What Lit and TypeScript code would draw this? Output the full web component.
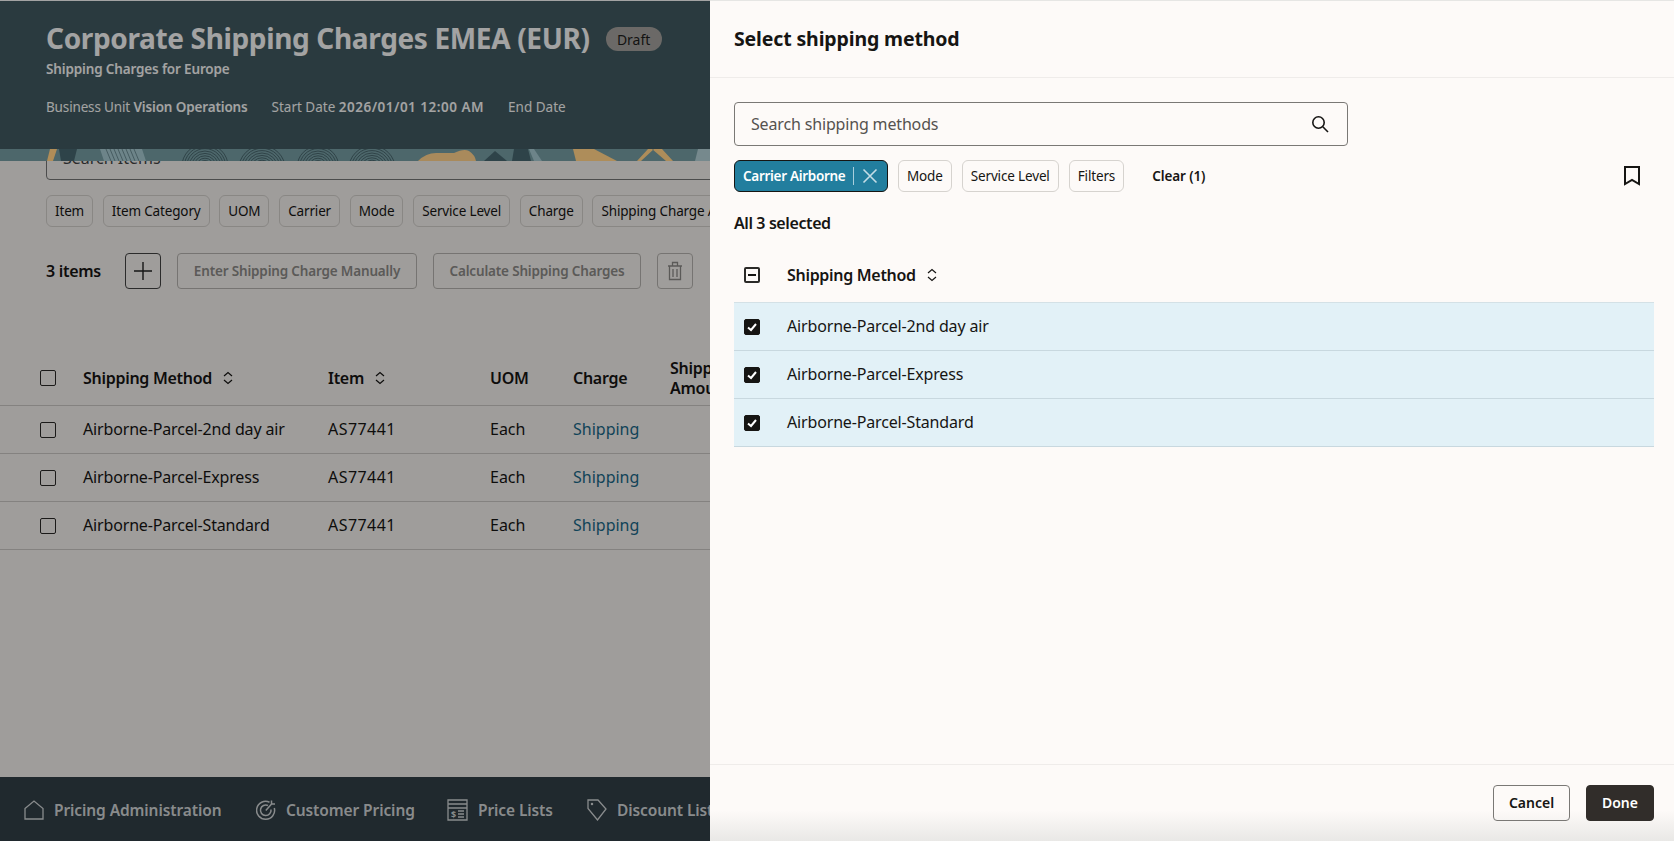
import { LitElement, html, svg, css } from "lit";
import { customElement, state } from "lit/decorators.js";

const rows = ["Airborne-Parcel-2nd day air", "Airborne-Parcel-Express", "Airborne-Parcel-Standard"];
const leftChips = ["Item", "Item Category", "UOM", "Carrier", "Mode", "Service Level", "Charge", "Shipping Charge Amount"];

const sortIcon = html`<svg class="sort" viewBox="0 0 12 14" width="12" height="14" fill="none" stroke="currentColor" stroke-width="1.2">
  <path d="M2 5 6 1.500 10 5M2 9 6 12.500 10 9" />
</svg>`;

const arcs = (cx: number, cy: number, n: number) =>
  Array.from({ length: n }, (_, i) => svg`<circle cx=${cx} cy=${cy} r=${4 + i * 2.4} />`);

// the strip paints above the scrim, so these are the dimmed colours as seen
const pattern = html`<svg class="pattern" viewBox="0 0 710 12" width="710" height="12">
  <rect width="710" height="12" fill="#4d676b" />
  <path d="M50 0h7l-4 12h-6z" fill="#b08d58" />
  <path d="M59 0h18l-3 12h-13z" fill="#2e4349" />
  <path d="M100 0h42l4 12h-42z" fill="#6d8489" />
  <g stroke="#3c5257" stroke-width=".8"><path d="M106 0l5 12M110 0l5 12M114 0l5 12M118 0l5 12M122 0l5 12M126 0l5 12M130 0l5 12M134 0l5 12" /></g>
  <g fill="none" stroke="#2c3f44" stroke-width=".9">${arcs(205, 18, 9)}${arcs(262, 20, 9)}${arcs(318, 18, 8)}${arcs(372, 20, 9)}</g>
  <path d="M418 12q8-8 18-8 12 0 18 0 10-5 15-2 6 4 7 10z" fill="#a98a5c" />
  <path d="M484 12 495 2l12 10z" fill="#2e4349" />
  <path d="M514 0h14l3 12h-19z" fill="#2e4349" />
  <path d="M529 0h5l8 12h-8z" fill="#6d8489" />
  <path d="M573 0h21l23 12h-41z" fill="#ae8d5a" />
  <path d="M654 0h-6l-11 12h4zM652 0h10l11 12h-7z" fill="#ae8d5a" />
  <path d="M698 0h12v12h-15z" fill="#76898d" />
</svg>`;

const homeIcon = html`<svg viewBox="0 0 20 20" width="20" height="20" fill="none" stroke="currentColor" stroke-width="1.3">
  <path d="M1 8.500 10 1l9 7.500V19H1z" />
</svg>`;
const targetIcon = html`<svg viewBox="0 0 20 22" width="20" height="22" fill="none" stroke="currentColor" stroke-width="1.5">
  <path d="M13.500 3.200A9 9 0 1 0 18.300 9" />
  <path d="M12 6.500A5.300 5.300 0 1 0 15 10.500" />
  <path d="M9.800 11.500 16 4.500M15.500 1.500V5h3.500" />
</svg>`;
const listIcon = html`<svg viewBox="0 0 21 22" width="21" height="22" fill="none" stroke="currentColor" stroke-width="1.3">
  <path d="M1 1h19v20H1zM1 5h19M1 9h19" />
  <text x="4" y="18.500" font-size="9" font-weight="700" fill="currentColor" stroke="none" font-family="Noto Sans">$</text>
  <path d="M11 12h6M11 15h6M11 18h6" stroke-width="1.600" />
</svg>`;
const tagIcon = html`<svg viewBox="0 0 20 22" width="20" height="22" fill="none" stroke="currentColor" stroke-width="1.3">
  <path d="M1 1h10l8 9-8.500 11L1 9.500z" />
  <circle cx="5" cy="5" r=".6" />
</svg>`;
const trashIcon = html`<svg viewBox="0 0 16 20" width="16" height="20" fill="none" stroke="currentColor" stroke-width="1.3">
  <path d="M1 5h14M5.500 5V1.500h5V5M2.500 5v13.500h11V5M6 8v8M10 8v8" />
</svg>`;

@customElement("app-root")
export class AppRoot extends LitElement {
  @state() private query = "";

  static styles = css`
    :host {
      display: block;
      position: relative;
      height: 100vh;
      overflow: hidden;
      font-family: "Noto Sans", sans-serif;
      color: #161513;
      background: #f9f6f3;
    }
    .page {
      height: 100%;
      display: flex;
      flex-direction: column;
      border-top: 1px solid #fff;
      box-sizing: border-box;
    }
    .hero {
      height: 148px;
      flex: none;
      box-sizing: border-box;
      background: #435c63;
      color: #fff;
      padding: 18px 46px 0;
    }
    .title-row {
      display: flex;
      align-items: center;
      gap: 16px;
      height: 38px;
    }
    h1 {
      margin: 0;
      font-size: 28px;
      font-weight: 700;
      white-space: nowrap;
      letter-spacing: -0.35px;
    }
    .badge {
      width: 56px;
      height: 24px;
      margin-top: 2px;
      border-radius: 12px;
      background: #a8a5a1;
      color: #1f1e1d;
      font-size: 14px;
      display: flex;
      align-items: center;
      justify-content: center;
    }
    .sub {
      font-size: 13.500px;
      font-weight: 600;
      line-height: 20px;
      margin-top: 2px;
      letter-spacing: -0.15px;
    }
    .meta {
      display: flex;
      gap: 24px;
      margin-top: 18px;
      font-size: 13.500px;
      line-height: 20px;
      white-space: nowrap;
    }
    .meta .bu {
      letter-spacing: -0.15px;
    }
    .meta b {
      font-weight: 600;
    }
    .meta b.date {
      letter-spacing: 0.5px;
    }
    .pattern {
      display: block;
      flex: none;
      width: 710px;
      height: 12px;
      position: relative;
      z-index: 1;
    }
    .main {
      flex: 1;
      overflow: hidden;
      min-height: 0;
    }
    .search-bg {
      margin: -25px 0 0 46px;
      height: 44px;
      width: 1200px;
      box-sizing: border-box;
      border: 1px solid #777;
      border-radius: 4px;
      padding-left: 16px;
      font-size: 16px;
      display: flex;
      align-items: center;
      color: #444;
    }
    .chips {
      display: flex;
      gap: 9.700px;
    }
    .left-chips {
      margin: 15px 0 0 46px;
      white-space: nowrap;
    }
    .chip {
      height: 32px;
      box-sizing: border-box;
      padding: 0 8px;
      border: 1px solid #d6d3cf;
      border-radius: 6px;
      font-size: 13.500px;
      letter-spacing: -0.15px;
      display: flex;
      align-items: center;
      white-space: nowrap;
      flex: none;
    }
    .toolbar {
      display: flex;
      align-items: center;
      margin: 26px 0 0 46px;
      height: 36px;
      white-space: nowrap;
    }
    .count {
      width: 79px;
      font-size: 16px;
      font-weight: 600;
      letter-spacing: -0.3px;
    }
    .btn {
      height: 36px;
      box-sizing: border-box;
      border: 1px solid #b9b6b2;
      border-radius: 4px;
      font-size: 13.500px;
      letter-spacing: -0.17px;
      font-weight: 600;
      color: #8f8d8a;
      display: flex;
      align-items: center;
      justify-content: center;
      flex: none;
    }
    .plus {
      width: 36px;
      margin-right: 16px;
      border-color: #444;
      color: #222;
    }
    .enter {
      width: 240px;
      margin-right: 16px;
    }
    .calc {
      width: 208px;
      margin-right: 16px;
    }
    .trash {
      width: 36px;
    }
    .grid {
      display: grid;
      grid-template-columns: 83px 245px 162px 83px 97px 200px;
      align-items: center;
      border-bottom: 1px solid #cfccc9;
      box-sizing: border-box;
      font-size: 16px;
      white-space: nowrap;
    }
    .grid.head {
      margin-top: 65px;
      height: 52px;
      padding-bottom: 3px;
      font-weight: 600;
      line-height: 20px;
      letter-spacing: -0.28px;
    }
    .grid.row {
      height: 48px;
    }
    .grid .box {
      margin-left: 40px;
    }
    .grid.row span:not(.box),
    .m-grid.row span:not(.box) {
      padding-bottom: 2px;
    }
    .method {
      letter-spacing: -0.16px;
    }
    .code {
      letter-spacing: 0.45px;
    }
    .with-sort {
      display: flex;
      align-items: center;
      gap: 10px;
    }
    .link {
      color: #1a6a8a;
    }
    .box {
      width: 16px;
      height: 16px;
      box-sizing: border-box;
      border: 1.500px solid #2b2a28;
      border-radius: 2px;
      display: flex;
      align-items: center;
      justify-content: center;
      flex: none;
    }
    .box.on {
      background: #161513;
      border-color: #161513;
    }
    .box.mixed {
      border-width: 2px;
    }
    .box.mixed::after {
      content: "";
      width: 8px;
      height: 2px;
      background: #161513;
    }
    .nav {
      height: 64px;
      flex: none;
      background: #324048;
      color: #d6dadc;
      display: flex;
      align-items: center;
      box-sizing: border-box;
      padding: 2px 0 0 24px;
      font-size: 15.500px;
      letter-spacing: -0.1px;
      font-weight: 600;
      white-space: nowrap;
    }
    .nav-item {
      display: flex;
      align-items: center;
      gap: 10px;
      flex: none;
    }
    .nav-item:nth-child(1) {
      width: 232px;
    }
    .nav-item:nth-child(2) {
      width: 191px;
    }
    .nav-item:nth-child(3) {
      width: 140px;
    }
    .scrim {
      position: absolute;
      inset: 0;
      background: rgba(0, 0, 0, 0.36);
    }
    .drawer {
      position: absolute;
      z-index: 2;
      top: 0;
      right: 0;
      bottom: 0;
      width: 964px;
      background: #fdfaf8;
      border-top: 1px solid #e6e6e4;
      box-sizing: border-box;
      display: flex;
      flex-direction: column;
    }
    .drawer-head {
      height: 77px;
      flex: none;
      box-sizing: border-box;
      border-bottom: 1px solid #efecea;
      padding: 0 24px 2px;
      display: flex;
      align-items: center;
    }
    h2 {
      margin: 0;
      font-size: 19.500px;
      letter-spacing: -0.14px;
      font-weight: 700;
    }
    .drawer-body {
      flex: 1;
      padding: 24px 20px 0 24px;
    }
    .search {
      width: 614px;
      height: 44px;
      box-sizing: border-box;
      border: 1px solid #7a7875;
      border-radius: 4px;
      padding: 0 18px 0 16px;
      display: flex;
      align-items: center;
      justify-content: space-between;
      background: transparent;
    }
    .search input {
      border: 0;
      outline: 0;
      background: none;
      flex: 1;
      font: inherit;
      font-size: 16px;
      letter-spacing: -0.16px;
      padding: 0 0 1px;
      color: #161513;
    }
    .search input::placeholder {
      color: #55524f;
      opacity: 1;
    }
    .filters {
      margin-top: 14px;
      display: flex;
      align-items: center;
    }
    .filters .chip {
      margin-right: 10px;
    }
    .filters .chip.active {
      background: #227e9e;
      border-color: #161513;
      color: #fff;
      font-weight: 600;
      letter-spacing: -0.3px;
      gap: 8px;
      width: 154px;
      margin-right: 10px;
    }
    .active i {
      width: 1px;
      height: 18px;
      background: #a9cfdc;
    }
    .active svg {
      flex: none;
    }
    .clear {
      margin-left: 18px;
      font-size: 13.500px;
      font-weight: 600;
      letter-spacing: -0.1px;
    }
    .mark {
      margin-left: auto;
      margin-right: 14px;
      display: block;
    }
    .selected {
      margin-top: 19px;
      font-size: 16px;
      font-weight: 600;
      line-height: 24px;
      letter-spacing: -0.4px;
    }
    .m-grid {
      display: grid;
      grid-template-columns: 43px 1fr;
      align-items: center;
      font-size: 16px;
      padding-left: 10px;
      box-sizing: border-box;
    }
    .m-grid.head {
      height: 68px;
      padding-top: 12px;
      font-weight: 600;
      letter-spacing: -0.3px;
    }
    .m-grid.row {
      height: 48px;
      background: #e2f1f7;
      border-bottom: 1px solid #c8d8df;
    }
    .m-head-line {
      border-bottom: 1px solid #d4e1e6;
    }
    .drawer-foot {
      height: 77px;
      flex: none;
      box-sizing: border-box;
      border-top: 1px solid #efecea;
      padding: 20px 20px 0 0;
      display: flex;
      justify-content: flex-end;
      gap: 16px;
      background: linear-gradient(#fdfaf8 60%, #e9e8e6 100%);
    }
    .action {
      height: 36px;
      box-sizing: border-box;
      border-radius: 4px;
      font-size: 14px;
      font-weight: 600;
      padding-bottom: 2px;
      display: flex;
      align-items: center;
      justify-content: center;
      border: 1px solid #7a7875;
      width: 77px;
    }
    .action.primary {
      width: 68px;
      background: #312d2a;
      border-color: #312d2a;
      color: #fff;
    }
  `;

  private tick() {
    return html`<span class="box on"><svg viewBox="0 0 12 12" width="12" height="12" fill="none" stroke="#fff" stroke-width="2"><path d="M2 6.500 5 9l5-6" /></svg></span>`;
  }

  render() {
    return html`
      <div class="page">
        <div class="hero">
          <div class="title-row">
            <h1>Corporate Shipping Charges EMEA (EUR)</h1>
            <span class="badge">Draft</span>
          </div>
          <div class="sub">Shipping Charges for Europe</div>
          <div class="meta">
            <span class="bu">Business Unit <b>Vision Operations</b></span>
            <span>Start Date <b class="date">2026/01/01 12:00 AM</b></span>
            <span>End Date</span>
          </div>
        </div>
        ${pattern}
        <div class="main">
          <div class="search-bg">Search Items</div>
          <div class="chips left-chips">${leftChips.map((c) => html`<span class="chip">${c}</span>`)}</div>
          <div class="toolbar">
            <span class="count">3 items</span>
            <span class="btn plus"><svg viewBox="0 0 18 18" width="18" height="18" stroke="currentColor" stroke-width="1.400"><path d="M9 0v18M0 9h18" /></svg></span>
            <span class="btn enter">Enter Shipping Charge Manually</span>
            <span class="btn calc">Calculate Shipping Charges</span>
            <span class="btn trash">${trashIcon}</span>
          </div>
          <div class="grid head">
            <span class="box"></span>
            <span class="with-sort">Shipping Method ${sortIcon}</span>
            <span class="with-sort">Item ${sortIcon}</span>
            <span>UOM</span>
            <span>Charge</span>
            <span>Shipping<br />Amount</span>
          </div>
          ${rows.map(
            (r) => html`<div class="grid row">
              <span class="box"></span>
              <span class="method">${r}</span>
              <span class="code">AS77441</span>
              <span>Each</span>
              <span class="link">Shipping</span>
              <span></span>
            </div>`
          )}
        </div>
        <div class="nav">
          <span class="nav-item">${homeIcon}Pricing Administration</span>
          <span class="nav-item">${targetIcon}Customer Pricing</span>
          <span class="nav-item">${listIcon}Price Lists</span>
          <span class="nav-item">${tagIcon}Discount Lists</span>
        </div>
      </div>
      <div class="scrim"></div>
      <div class="drawer">
        <div class="drawer-head"><h2>Select shipping method</h2></div>
        <div class="drawer-body">
          <label class="search">
            <input placeholder="Search shipping methods" .value=${this.query} @input=${(e: any) => (this.query = e.target.value)} />
            <svg viewBox="0 0 18 18" width="18" height="18" fill="none" stroke="#161513" stroke-width="1.600"><circle cx="7.500" cy="7.500" r="5.700" /><path d="M11.800 11.800 17 17" /></svg>
          </label>
          <div class="filters">
            <span class="chip active">Carrier Airborne<i></i><svg viewBox="0 0 16 16" width="16" height="16" stroke="#c4dde6" stroke-width="1.600"><path d="M1.500 1.500l13 13M14.500 1.500l-13 13" /></svg></span>
            <span class="chip">Mode</span>
            <span class="chip">Service Level</span>
            <span class="chip">Filters</span>
            <span class="clear">Clear (1)</span>
            <svg class="mark" viewBox="0 0 16 20" width="16" height="20" fill="none" stroke="#161513" stroke-width="2"><path d="M1 1h14v17l-7-4-7 4z" /></svg>
          </div>
          <div class="selected">All 3 selected</div>
          <div class="m-grid head m-head-line">
            <span class="box mixed"></span>
            <span class="with-sort">Shipping Method ${sortIcon}</span>
          </div>
          ${rows.map((r) => html`<div class="m-grid row">${this.tick()}<span class="method">${r}</span></div>`)}
        </div>
        <div class="drawer-foot">
          <span class="action">Cancel</span>
          <span class="action primary">Done</span>
        </div>
      </div>
    `;
  }
}
